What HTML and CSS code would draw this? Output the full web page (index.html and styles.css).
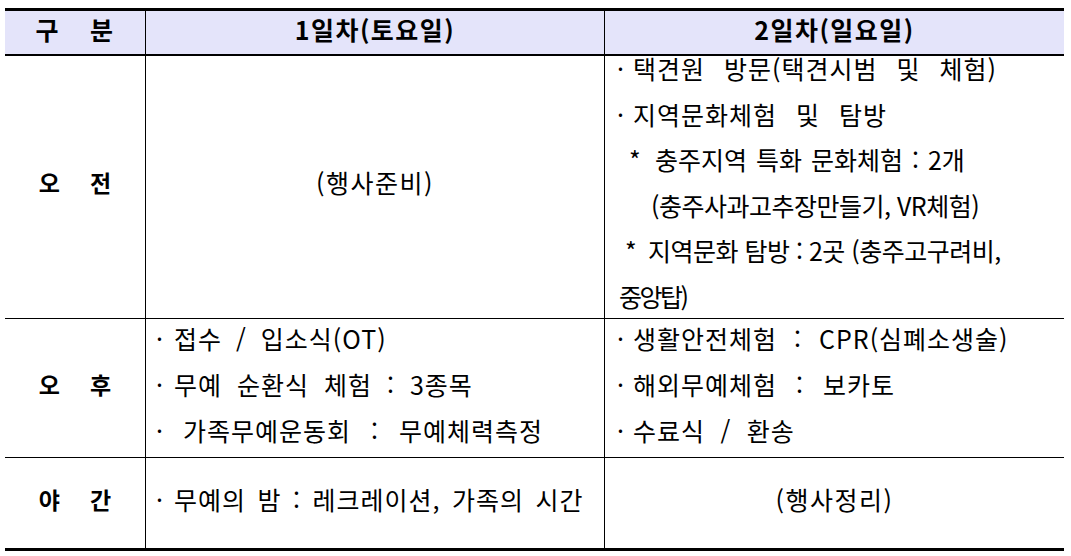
FILE: index.html
```html
<!DOCTYPE html>
<html lang="ko">
<head>
<meta charset="utf-8">
<title>일정표</title>
<link rel="stylesheet" href="styles.css">
</head>
<body>
<div class="sheet">
  <div class="table">
    <div class="cell head c1"><span class="split"><span>구</span><span>분</span></span></div>
    <div class="cell head c2">1일차(토요일)</div>
    <div class="cell head c3">2일차(일요일)</div>

    <div class="cell label c1 r1"><span class="split"><span>오</span><span>전</span></span></div>
    <div class="cell center c2 r1">(행사준비)</div>
    <div class="cell list c3 r1">
      <div class="ln l1"><span class="b">·</span>택견원 방문(택견시범 및 체험)</div>
      <div class="ln l2"><span class="b">·</span>지역문화체험 및 탐방</div>
      <div class="ln l3"><span class="star">*</span>충주지역 특화 문화체험 : 2개</div>
      <div class="ln l4">(충주사과고추장만들기, VR체험)</div>
      <div class="ln l5"><span class="star2">*</span>지역문화 탐방 : 2곳 (충주고구려비,</div>
      <div class="ln l6">중앙탑)</div>
    </div>

    <div class="cell label c1 r2"><span class="split"><span>오</span><span>후</span></span></div>
    <div class="cell list c2 r2">
      <div class="ln m1"><span class="b">·</span>접수 / 입소식(OT)</div>
      <div class="ln m2"><span class="b">·</span>무예 순환식 체험 : 3종목</div>
      <div class="ln m3"><span class="b wide">·</span>가족무예운동회 : 무예체력측정</div>
    </div>
    <div class="cell list c3 r2">
      <div class="ln n1"><span class="b">·</span>생활안전체험 : CPR(심폐소생술)</div>
      <div class="ln n2"><span class="b">·</span>해외무예체험 : 보카토</div>
      <div class="ln n3"><span class="b">·</span>수료식 / 환송</div>
    </div>

    <div class="cell label c1 r3 last"><span class="split"><span>야</span><span>간</span></span></div>
    <div class="cell list c2 r3 last">
      <div class="ln k1"><span class="b">·</span>무예의 밤 : 레크레이션, 가족의 시간</div>
    </div>
    <div class="cell center c3 r3 last">(행사정리)</div>
  </div>
</div>
</body>
</html>
```

FILE: styles.css
```css
html, body {
  margin: 0;
  padding: 0;
  background: #ffffff;
}

body {
  font-family: "Noto Sans CJK KR", "Noto Sans", sans-serif;
  color: #000000;
}

.sheet {
  padding: 8px 0 0 5px;
}

.table {
  width: 1059px;
  display: grid;
  grid-template-columns: 140px 459px 460px;
  grid-template-rows: 45px 263px 139px 90px;
  border-top: 3px solid #000;
  border-bottom: 3px solid #000;
}

.cell {
  display: flex;
  flex-direction: column;
  justify-content: center;
  font-size: 25px;
  letter-spacing: 1px;
  line-height: 45.5px;
  border-bottom: 1px solid #000;
  padding-bottom: 9px;
  min-height: 0;
}

.cell.last {
  border-bottom: none;
  padding-bottom: 6px;
}

.c2, .c3 {
  border-left: 1px solid #000;
}

.head {
  background: #e4e4fa;
  font-weight: 700;
  font-size: 25px;
  letter-spacing: 1.5px;
  align-items: center;
  border-bottom: 2px solid #000;
  padding-bottom: 5px;
}

.label {
  align-items: center;
  font-weight: 700;
  font-size: 23px;
  letter-spacing: 0;
}

.split {
  display: flex;
  gap: 30px;
}

.center {
  align-items: center;
  letter-spacing: 1.5px;
}

.r2 {
  line-height: 46px;
}

.list {
  justify-content: center;
}

.ln {
  white-space: pre;
}

.b {
  display: inline-block;
  box-sizing: border-box;
  width: 28px;
  padding-left: 10px;
}

.c3 .b {
  width: 28px;
  padding-left: 12px;
}

.b.wide {
  width: 37px;
}

.star {
  display: inline-block;
  box-sizing: border-box;
  padding-left: 24px;
  width: 50px;
}

.star2 {
  display: inline-block;
  box-sizing: border-box;
  padding-left: 20px;
  width: 43px;
}

.l1 { word-spacing: 11px; }
.l2 { word-spacing: 11px; }
.l3 { word-spacing: 2px; letter-spacing: 0; }
.l4 { padding-left: 46px; word-spacing: 0; letter-spacing: -0.5px; }
.l5 { letter-spacing: -0.5px; word-spacing: 0; }
.l6 { padding-left: 14px; letter-spacing: -2.5px; }

.m1 { word-spacing: 6px; }
.m2 { word-spacing: 7px; }
.m3 { word-spacing: 12px; }

.n1 { word-spacing: 9px; }
.n2 { word-spacing: 11px; }
.n3 { word-spacing: 7.5px; }

.k1 { word-spacing: 3.5px; }
```
